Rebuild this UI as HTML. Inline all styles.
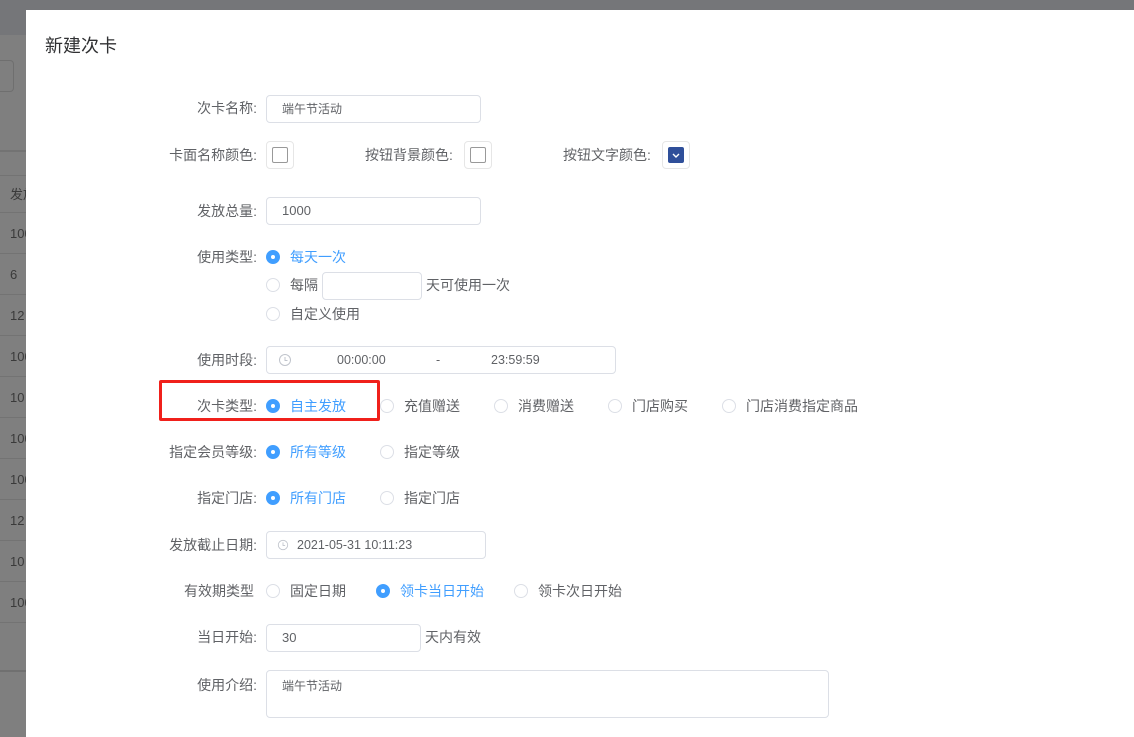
<!DOCTYPE html>
<html><head><meta charset="utf-8"><style>
*{margin:0;padding:0;box-sizing:border-box}
body{width:1134px;height:737px;overflow:hidden;position:relative;background:#7f7f7f;font-family:"Liberation Sans","Noto Sans CJK SC",sans-serif;font-size:14px;color:#606266}
.abs{position:absolute}
.bgrow{position:absolute;left:0;width:26px;border-top:1px solid #737373;color:#3a3a3a;font-size:13px;padding-left:10px;white-space:nowrap;overflow:hidden}
.modal{position:absolute;left:26px;top:10px;right:0;bottom:0;background:#fff}
.lbl{position:absolute;width:240px;left:17px;text-align:right;white-space:nowrap;margin-top:-2px}
.inp{position:absolute;border:1px solid #dcdfe6;border-radius:4px;background:#fff;padding-left:15px;white-space:nowrap;font-size:13px}
.r{position:absolute;width:14px;height:14px;border:1px solid #dcdfe6;border-radius:50%;background:#fff}
.r.on{background:#409eff;border-color:#409eff}
.r.on::after{content:"";position:absolute;left:4px;top:4px;width:4px;height:4px;border-radius:50%;background:#fff}
.t{position:absolute;white-space:nowrap;margin-top:-2px}
.blue{color:#409eff}
.sw{position:absolute;width:28px;height:28px;border:1px solid #e6e6e6;border-radius:4px;background:#fff}
.sw i{position:absolute;left:5px;top:5px;width:16px;height:16px;border:1px solid #999;border-radius:2px}
</style></head><body>
<div class="abs" style="left:0;top:0;width:1134px;height:35px;background:#757679"></div>
<div class="abs" style="left:0;top:60px;width:14px;height:32px;border:1px solid #6f6f6f;border-left:none;border-radius:0 4px 4px 0"></div>
<div class="abs" style="left:0;top:150px;width:26px;height:2px;background:#737373"></div>
<div class="bgrow" style="top:175px;height:37px;line-height:37px">发放</div>
<div class="bgrow" style="top:212px;height:41px;line-height:41px">100</div>
<div class="bgrow" style="top:253px;height:41px;line-height:41px">6</div>
<div class="bgrow" style="top:294px;height:41px;line-height:41px">12</div>
<div class="bgrow" style="top:335px;height:41px;line-height:41px">100</div>
<div class="bgrow" style="top:376px;height:41px;line-height:41px">10</div>
<div class="bgrow" style="top:417px;height:41px;line-height:41px">100</div>
<div class="bgrow" style="top:458px;height:41px;line-height:41px">100</div>
<div class="bgrow" style="top:499px;height:41px;line-height:41px">12</div>
<div class="bgrow" style="top:540px;height:41px;line-height:41px">10</div>
<div class="bgrow" style="top:581px;height:41px;line-height:41px">100</div>
<div class="bgrow" style="top:622px;height:48px"></div>
<div class="abs" style="left:0;top:670px;width:26px;height:2px;background:#707070"></div>

<div class="modal">
<div class="t" style="left:19px;top:24px;font-size:18px;color:#303133">新建次卡</div>
</div>

<div class="lbl" style="top:100px">次卡名称:</div>
<div class="inp" style="left:266px;top:95px;width:215px;height:28px;line-height:26px;font-size:12px">端午节活动</div>

<div class="lbl" style="top:147px">卡面名称颜色:</div>
<div class="sw" style="left:266px;top:141px"><i></i></div>
<div class="t" style="left:365px;top:147px">按钮背景颜色:</div>
<div class="sw" style="left:464px;top:141px"><i></i></div>
<div class="t" style="left:563px;top:147px">按钮文字颜色:</div>
<div class="sw" style="left:662px;top:141px"><i style="background:#2f4f9a;border-color:#2f4f9a"><svg width="14" height="14" viewBox="0 0 14 14" style="position:absolute;left:0;top:0"><path d="M4 6l3 3 3-3" stroke="#fff" stroke-width="1.4" fill="none"/></svg></i></div>

<div class="lbl" style="top:203px">发放总量:</div>
<div class="inp" style="left:266px;top:197px;width:215px;height:28px;line-height:26px">1000</div>

<div class="lbl" style="top:249px">使用类型:</div>
<div class="r on" style="left:266px;top:250px"></div><div class="t blue" style="left:290px;top:249px">每天一次</div>
<div class="r" style="left:266px;top:278px"></div><div class="t" style="left:290px;top:277px">每隔</div>
<div class="inp" style="left:322px;top:272px;width:100px;height:28px"></div>
<div class="t" style="left:426px;top:277px">天可使用一次</div>
<div class="r" style="left:266px;top:307px"></div><div class="t" style="left:290px;top:306px">自定义使用</div>

<div class="lbl" style="top:352px">使用时段:</div>
<div class="inp" style="left:266px;top:346px;width:350px;height:28px;color:#606266;font-size:12.5px">
<svg width="14" height="14" viewBox="0 0 14 14" style="position:absolute;left:11px;top:6px"><circle cx="7" cy="7" r="5.5" stroke="#c0c4cc" fill="none"/><path d="M7 4v3.5h2.5" stroke="#c0c4cc" fill="none"/></svg>
<span class="t" style="left:70px;top:8px">00:00:00</span><span class="t" style="left:169px;top:8px">-</span><span class="t" style="left:224px;top:8px">23:59:59</span></div>

<div class="abs" style="left:159px;top:380px;width:221px;height:41px;border:3px solid #f0201b;border-radius:2px"></div>
<div class="lbl" style="top:398px">次卡类型:</div>
<div class="r on" style="left:266px;top:399px"></div><div class="t blue" style="left:290px;top:398px">自主发放</div>
<div class="r" style="left:380px;top:399px"></div><div class="t" style="left:404px;top:398px">充值赠送</div>
<div class="r" style="left:494px;top:399px"></div><div class="t" style="left:518px;top:398px">消费赠送</div>
<div class="r" style="left:608px;top:399px"></div><div class="t" style="left:632px;top:398px">门店购买</div>
<div class="r" style="left:722px;top:399px"></div><div class="t" style="left:746px;top:398px">门店消费指定商品</div>

<div class="lbl" style="top:444px">指定会员等级:</div>
<div class="r on" style="left:266px;top:445px"></div><div class="t blue" style="left:290px;top:444px">所有等级</div>
<div class="r" style="left:380px;top:445px"></div><div class="t" style="left:404px;top:444px">指定等级</div>

<div class="lbl" style="top:490px">指定门店:</div>
<div class="r on" style="left:266px;top:491px"></div><div class="t blue" style="left:290px;top:490px">所有门店</div>
<div class="r" style="left:380px;top:491px"></div><div class="t" style="left:404px;top:490px">指定门店</div>

<div class="lbl" style="top:537px">发放截止日期:</div>
<div class="inp" style="left:266px;top:531px;width:220px;height:28px;line-height:26px;padding-left:30px;font-size:12.5px">
<svg width="12" height="12" viewBox="0 0 14 14" style="position:absolute;left:10px;top:7px"><circle cx="7" cy="7" r="5.5" stroke="#c0c4cc" fill="none"/><path d="M7 4v3.5h2.5" stroke="#c0c4cc" fill="none"/></svg>2021-05-31 10:11:23</div>

<div class="lbl" style="top:583px;left:14px">有效期类型</div>
<div class="r" style="left:266px;top:584px"></div><div class="t" style="left:290px;top:583px">固定日期</div>
<div class="r on" style="left:376px;top:584px"></div><div class="t blue" style="left:400px;top:583px">领卡当日开始</div>
<div class="r" style="left:514px;top:584px"></div><div class="t" style="left:538px;top:583px">领卡次日开始</div>

<div class="lbl" style="top:629px">当日开始:</div>
<div class="inp" style="left:266px;top:624px;width:155px;height:28px;line-height:26px">30</div>
<div class="t" style="left:425px;top:629px">天内有效</div>

<div class="lbl" style="top:677px">使用介绍:</div>
<div class="inp" style="left:266px;top:670px;width:563px;height:48px;padding-top:6px;font-size:12px">端午节活动</div>
</body></html>
